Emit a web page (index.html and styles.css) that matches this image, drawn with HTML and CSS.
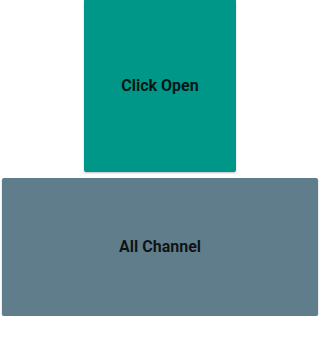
FILE: index.html
```html
<!DOCTYPE html>
<html>
<head>
<meta charset="utf-8">
<meta name="viewport" content="width=device-width, initial-scale=1">
<link rel="stylesheet" href="styles.css">
</head>
<body>
  <div class="page">
    <div class="card card-open"><span class="label">Click Open</span></div>
    <div class="card card-channel"><span class="label">All Channel</span></div>
  </div>
</body>
</html>
```

FILE: styles.css
```css
html, body {
  margin: 0;
  padding: 0;
  background: #ffffff;
}
.page {
  display: flex;
  flex-direction: column;
  align-items: center;
  gap: 6px;
  padding: 0 2px;
  font-family: Roboto, "Liberation Sans", sans-serif;
}
.card {
  display: flex;
  align-items: center;
  justify-content: center;
  border-radius: 2px;
  box-shadow: 0 1px 2px rgba(0, 0, 0, 0.25);
}
.card-open {
  width: 48%;
  height: 172px;
  background: #009688;
  border-radius: 0 0 2px 2px;
}
.card-channel {
  align-self: stretch;
  height: 138px;
  background: #607d8b;
}
.label {
  font-size: 16px;
  font-weight: 700;
  color: rgba(0, 0, 0, 0.85);
  line-height: 1;
}
```
